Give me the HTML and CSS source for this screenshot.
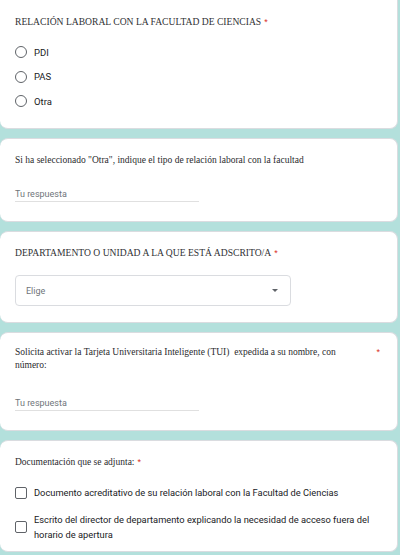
FILE: index.html
```html
<!DOCTYPE html>
<html lang="es">
<head>
<meta charset="utf-8">
<title>Formulario</title>
<link rel="stylesheet" href="styles.css">
</head>
<body>
<div class="form">
  <section class="card card-first">
    <div class="title"><span class="title-text caps">RELACIÓN LABORAL CON LA FACULTAD DE CIENCIAS</span><span class="req">*</span></div>
    <div class="options">
      <label class="option"><span class="radio"></span><span class="opt-label">PDI</span></label>
      <label class="option"><span class="radio"></span><span class="opt-label">PAS</span></label>
      <label class="option"><span class="radio"></span><span class="opt-label">Otra</span></label>
    </div>
  </section>

  <section class="card card-text">
    <div class="title"><span class="title-text">Si ha seleccionado "Otra", indique el tipo de relación laboral con la facultad</span></div>
    <div class="answer">Tu respuesta</div>
  </section>

  <section class="card card-select">
    <div class="title"><span class="title-text caps">DEPARTAMENTO O UNIDAD A LA QUE ESTÁ ADSCRITO/A</span><span class="req">*</span></div>
    <div class="select"><span class="select-label">Elige</span><span class="arrow"></span></div>
  </section>

  <section class="card card-tui">
    <div class="title title-split"><span class="title-text wide">Solicita activar la Tarjeta Universitaria Inteligente (TUI)&nbsp; expedida a su nombre, con número:</span><span class="req">*</span></div>
    <div class="answer">Tu respuesta</div>
  </section>

  <section class="card card-docs">
    <div class="title"><span class="title-text">Documentación que se adjunta:</span><span class="req">*</span></div>
    <div class="checks">
      <label class="check-row"><span class="checkbox"></span><span class="check-label">Documento acreditativo de su relación laboral con la Facultad de Ciencias</span></label>
      <label class="check-row"><span class="checkbox"></span><span class="check-label">Escrito del director de departamento explicando la necesidad de acceso fuera del horario de apertura</span></label>
    </div>
  </section>
</div>
</body>
</html>
```

FILE: styles.css
```css
html, body {
  margin: 0;
  padding: 0;
}
body {
  background: #b3e0dc;
  color: #202124;
  width: 400px;
  height: 555px;
  overflow: hidden;
}
.form {
  display: flex;
  flex-direction: column;
  gap: 9px;
  width: 398px;
}
.card {
  background: #fff;
  border: 1px solid #dadce0;
  border-left: none;
  border-radius: 8px;
  padding: 14px 15px 16px 15px;
  box-sizing: border-box;
}
.card-first {
  border-top: none;
  border-radius: 0 0 8px 8px;
  height: 129px;
  padding-top: 15px;
}
.card-text { height: 84px; }
.card-select { height: 92px; }
.card-tui { height: 99px; padding-top: 13px; }
.card-docs { height: 112px; }

.title {
  display: flex;
  font-family: "Liberation Serif", "Times New Roman", serif;
  font-size: 9.5px;
  line-height: 14px;
  color: #2a2b2e;
}
.title-text.caps {
  font-size: 9.6px;
  color: #303134;
}
.title-split {
  justify-content: space-between;
  line-height: 13px;
}
.title-text.wide {
  width: 340px;
}
.req {
  color: #d93025;
  margin-left: 3px;
  font-family: "Liberation Sans", Arial, sans-serif;
  font-size: 9px;
}
.title-split .req {
  margin-right: 2px;
}

.options {
  display: flex;
  flex-direction: column;
  margin-top: 11px;
}
.option {
  display: flex;
  align-items: center;
  height: 24.5px;
  gap: 7px;
}
.radio {
  width: 10px;
  height: 10px;
  border: 1.5px solid #5f6368;
  border-radius: 50%;
}
.opt-label, .check-label, .answer, .select-label {
  font-family: Roboto, "Liberation Sans", Arial, sans-serif;
  font-size: 9.5px;
  color: #202124;
}

.answer {
  margin-top: 20px;
  width: 184px;
  line-height: 14px;
  color: #70757a;
  border-bottom: 1px solid #e0e0e0;
  font-size: 9px;
}
.card-tui .answer {
  margin-top: 24px;
}

.select {
  margin-top: 15px;
  width: 276px;
  height: 31px;
  box-sizing: border-box;
  border: 1px solid #dadce0;
  border-radius: 4px;
  display: flex;
  align-items: center;
  justify-content: space-between;
  padding: 0 12px 0 10px;
}
.select-label {
  color: #70757a;
  font-size: 9px;
}
.arrow {
  width: 0;
  height: 0;
  border-left: 3px solid transparent;
  border-right: 3px solid transparent;
  border-top: 3px solid #5f6368;
}

.checks {
  display: flex;
  flex-direction: column;
  margin-top: 16px;
  gap: 12px;
}
.check-row {
  display: flex;
  align-items: center;
  gap: 7px;
}
.checkbox {
  flex: none;
  width: 10px;
  height: 10px;
  border: 1.5px solid #5f6368;
  border-radius: 2px;
}
.check-label {
  line-height: 15px;
  font-size: 9.3px;
}
```
